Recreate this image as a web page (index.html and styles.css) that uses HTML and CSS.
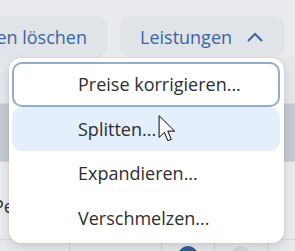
FILE: index.html
```html
<!DOCTYPE html>
<html lang="de">
<head>
    <meta charset="UTF-8">
    <meta name="viewport" content="width=device-width, initial-scale=1.0">
    <title>Leistungen</title>
    <link rel="stylesheet" href="styles.css">
</head>
<body>
    <div class="page">
        <div class="toolbar">
            <button class="tool-button delete">Leistungen löschen</button>
            <button class="tool-button open">
                <span>Leistungen</span>
                <svg width="16" height="10" viewBox="0 0 16 10" fill="none" stroke="currentColor" stroke-width="2">
                    <polyline points="1 9 8 2 15 9"/>
                </svg>
            </button>
        </div>

        <div class="table">
            <div class="row head"></div>
            <div class="row band"></div>
            <div class="row body"><span class="cell-text">Pe</span></div>
            <div class="row grid">
                <div class="col"></div>
                <div class="col"></div>
                <div class="col"><span class="dot blue"></span></div>
                <div class="col"><span class="dot gray"></span></div>
                <div class="col"></div>
            </div>
        </div>

        <div class="menu">
            <div class="menu-item focused">Preise korrigieren...</div>
            <div class="menu-item hovered">Splitten...</div>
            <div class="menu-item">Expandieren...</div>
            <div class="menu-item">Verschmelzen...</div>
        </div>

        <svg class="cursor" width="19" height="28" viewBox="0 0 13 20">
            <path d="M0.5 0.5 L0.5 16 L4.3 12.4 L6.8 18.4 L9.2 17.4 L6.7 11.5 L11.6 11.5 Z" fill="white" stroke="black" stroke-width="0.7" stroke-linejoin="round"/>
        </svg>
    </div>
</body>
</html>
```

FILE: styles.css
```css
* {
    margin: 0;
    padding: 0;
    box-sizing: border-box;
}

body {
    font-family: "Open Sans", "Noto Sans", sans-serif;
    background-color: #e9ebee;
    overflow: hidden;
}

.page {
    position: relative;
    width: 295px;
    height: 251px;
    overflow: hidden;
}

.toolbar {
    display: flex;
    justify-content: flex-end;
    gap: 13px;
    padding: 16px 10px 0 0;
    height: 57px;
}

.tool-button {
    height: 41px;
    border: none;
    border-radius: 10px;
    background-color: #e0e3e8;
    color: #3b66a3;
    font-family: inherit;
    font-size: 18px;
    display: flex;
    align-items: center;
    white-space: nowrap;
    flex-shrink: 0;
}

.tool-button.delete {
    width: 200px;
    justify-content: flex-end;
    padding-right: 20px;
}

.tool-button.open {
    width: 165px;
    padding-left: 20px;
    gap: 15px;
}

.table {
    display: flex;
    flex-direction: column;
}

.row {
    border-bottom: 1px solid #d3d6dc;
}

.row.head {
    height: 47px;
    background-color: #e3e5e9;
}

.row.band {
    height: 58px;
    background-color: #c4c9d1;
}

.row.body {
    height: 78px;
    display: flex;
    align-items: center;
    padding-top: 10px;
    background-color: #e8eaed;
}

.cell-text {
    font-size: 18px;
    color: #333;
    margin-left: -7px;
}

.row.grid {
    display: flex;
    height: 11px;
    border-bottom: none;
    background-color: #e6e8ec;
}

.col {
    border-right: 1px solid #d0d3d9;
    display: flex;
    justify-content: center;
    padding-top: 6px;
}

.col:nth-child(1) { width: 70px; }
.col:nth-child(2) { width: 92px; }
.col:nth-child(3) { width: 53px; }
.col:nth-child(4) { width: 53px; }
.col:nth-child(5) { flex: 1; border-right: none; }

.dot {
    width: 20px;
    height: 20px;
    flex-shrink: 0;
    border-radius: 50%;
}

.dot.blue {
    background-color: #2f5b99;
}

.dot.gray {
    background-color: #d4d7dd;
}

.menu {
    position: absolute;
    left: 9px;
    top: 58px;
    width: 275px;
    height: 185px;
    padding: 4px 4px 0 3px;
    background-color: white;
    border-radius: 12px;
    box-shadow: 0 4px 10px rgba(0, 0, 0, 0.12), 0 0 2px rgba(0, 0, 0, 0.1);
}

.menu-item {
    height: 44.5px;
    display: flex;
    align-items: center;
    padding-left: 64px;
    font-size: 18px;
    color: #2e2e2e;
    border-radius: 10px;
    border: 2px solid transparent;
}

.menu-item.focused {
    border: 2.5px solid #92adcc;
}

.menu-item.hovered {
    background-color: #e5eefb;
}

.cursor {
    position: absolute;
    left: 158px;
    top: 115px;
}
```
